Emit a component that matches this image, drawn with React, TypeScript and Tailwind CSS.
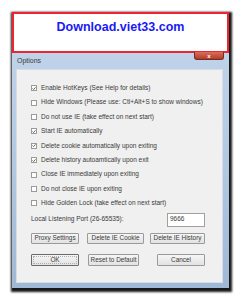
const options: { label: string; checked: boolean }[] = [
  { label: "Enable HotKeys (See Help for details)", checked: true },
  { label: "Hide Windows (Please use: Ctl+Alt+S to show windows)", checked: false },
  { label: "Do not use IE (take effect on next start)", checked: false },
  { label: "Start IE automatically", checked: true },
  { label: "Delete cookie automatically upon exiting", checked: true },
  { label: "Delete history autoamtically upon exit", checked: true },
  { label: "Close IE immediately upon exiting", checked: false },
  { label: "Do not close IE upon exiting", checked: false },
  { label: "Hide Golden Lock (take effect on next start)", checked: false },
];

const Check = ({ on }: { on: boolean }) => (
  <div className="w-[6px] h-[6px] border border-[#9a9b9b] bg-white flex items-center justify-center shrink-0">
    {on && (
      <svg width="5" height="5" viewBox="0 0 5 5">
        <path d="M0.6 2.4 L2 3.8 L4.4 1" stroke="#444" strokeWidth="1" fill="none" />
      </svg>
    )}
  </div>
);

const Btn = ({ label, className }: { label: string; className: string }) => (
  <div
    className={`h-full flex items-center justify-center border border-[#9a9a9a] rounded-[1px] bg-gradient-to-b from-[#f6f6f6] to-[#e2e2e2] text-[6.4px] text-[#3a3a3a] whitespace-nowrap ${className}`}
  >
    {label}
  </div>
);

export default function App() {
  return (
    <div className="w-[241px] h-[300px] bg-white overflow-hidden pt-[12px] pl-[12px] font-['Liberation_Sans',Arial,sans-serif]">
      <div className="w-[217px] bg-gradient-to-b from-[#c3d6ec] via-[#b4cae4] to-[#9fb8d6] shadow-[1px_2px_2px_2px_rgba(0,0,0,0.9)]">
        <div className="h-[41px] border-2 border-[#ee2430] bg-white flex justify-center pt-[5px]">
          <span className="text-[12.5px] font-bold text-[#1a1af4] leading-none mt-[2px]">
            Download.viet33.com
          </span>
        </div>

        <div className="h-[16px] flex items-start justify-between pl-[5px] pr-[5px]">
          <span className="text-[7px] text-[#3a3a3a] mt-[4px] leading-none">Options</span>
          <div className="w-[30px] h-[8px] mt-[-1px] rounded-b-[3px] bg-gradient-to-b from-[#d8705c] to-[#b33a26] border border-[#7a2a20] border-t-0 flex items-center justify-center">
            <span className="text-[6px] text-white font-bold leading-none">x</span>
          </div>
        </div>

        <div className="px-[4px] pr-[6px] pb-[5px]">
          <div className="bg-[#f0f0f0] border border-[#d8dde4] pt-[11px] pb-[16px]">
            {options.map((o) => (
              <div key={o.label} className="h-[14.4px] flex items-center pl-[14px]">
                <Check on={o.checked} />
                <span className="ml-[4px] text-[6.5px] text-[#3a3a3a] leading-none whitespace-nowrap">
                  {o.label}
                </span>
              </div>
            ))}

            <div className="mt-[2px] h-[14px] flex items-center pl-[14px]">
              <span className="text-[6.5px] text-[#3a3a3a] w-[136px] leading-none whitespace-nowrap">
                Local Listening Port (26-65535):
              </span>
              <div className="w-[38px] h-full border border-[#a0a0a0] bg-white flex items-center pl-[2px]">
                <span className="text-[6.5px] text-[#3a3a3a] leading-none">9666</span>
              </div>
            </div>

            <div className="mt-[6px] h-[11px] flex pl-[14px]">
              <Btn label="Proxy Settings" className="w-[48px]" />
              <Btn label="Delete IE Cookie" className="w-[57px] ml-[8px]" />
              <Btn label="Delete IE History" className="w-[55px] ml-[6px]" />
            </div>

            <div className="mt-[10px] h-[12px] flex pl-[14px]">
              <div className="w-[48px] h-full border border-[#6a6a6a] rounded-[1px] bg-gradient-to-b from-[#f6f6f6] to-[#e2e2e2] p-[1px]">
                <div className="w-full h-full border border-dotted border-[#b0b0b0] flex items-center justify-center text-[6.4px] text-[#3a3a3a]">
                  OK
                </div>
              </div>
              <Btn label="Reset to Default" className="w-[51px] ml-[9px]" />
              <Btn label="Cancel" className="w-[48px] ml-[18px]" />
            </div>
          </div>
        </div>
      </div>
    </div>
  );
}
